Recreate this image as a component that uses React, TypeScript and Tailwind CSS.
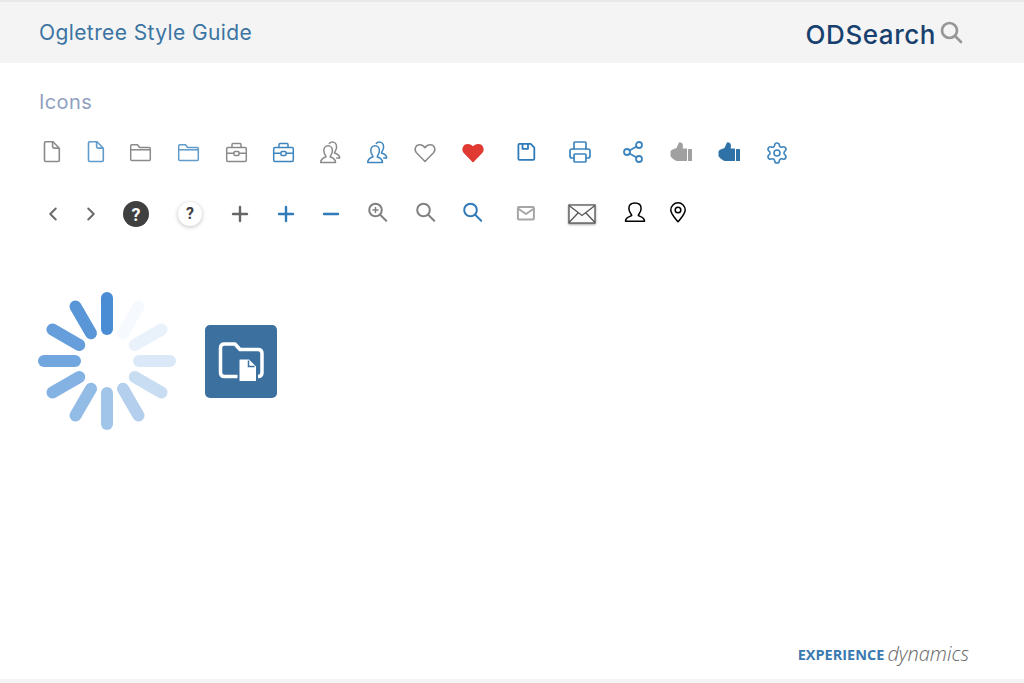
import { ChevronLeft, ChevronRight, Minus, Plus, Printer, Settings, Share2 } from "lucide-react";

type P = { className?: string };

const base = "w-6 h-6 shrink-0";

function Doc({ className }: P) {
  return (
    <svg viewBox="0 0 24 24" fill="none" stroke="currentColor" strokeWidth="1.600" strokeLinejoin="round" className={`${base} ${className}`}>
      <path d="M6.700 1.700h7.300l6.300 6.500v12.100q0 1.200-1.200 1.200H6.700q-1.200 0-1.200-1.200V2.900q0-1.200 1.200-1.200Z" />
      <path d="M13.600 1.900v4.700q0 1.500 1.500 1.500h5" />
    </svg>
  );
}

function Folder({ className }: P) {
  return (
    <svg viewBox="0 0 24 24" fill="none" stroke="currentColor" strokeWidth="1.500" strokeLinejoin="round" className={`${base} ${className}`}>
      <path d="M2.700 7.500V6q0-1.300 1.300-1.300h5.500l2 2.800h9.800q1 0 1 1v11q0 1-1 1H3.700q-1 0-1-1Z" />
      <path d="M2.700 9.800h19.600" />
    </svg>
  );
}

function Briefcase({ className }: P) {
  return (
    <svg viewBox="0 0 24 24" fill="none" stroke="currentColor" strokeWidth="1.500" strokeLinejoin="round" className={`${base} ${className}`}>
      <rect x="2.700" y="7.500" width="19.600" height="14" rx="1.200" />
      <path d="M8 7.500V4.500q0-1 1-1h7q1 0 1 1v3" />
      <path d="M2.700 13.300h7.300M15 13.300h7.300" />
      <rect x="10" y="11.500" width="5" height="4" rx="1" />
    </svg>
  );
}

function Users({ className }: P) {
  return (
    <svg viewBox="0 0 24 24" fill="none" stroke="currentColor" strokeWidth="1.500" strokeLinejoin="round" strokeLinecap="round" className={`${base} ${className}`}>
      <path d="M2.700 22.500c0-4.200 3.200-4.700 5.300-5.700 0-1.200-2.200-2.800-2.200-6.100 0-3.200 2.100-5 4.300-5s4.300 1.800 4.300 5c0 3.300-2.200 4.900-2.200 6.100 2.100 1 5.300 1.500 5.300 5.700Z" />
      <path d="M11.300 3.500c.8-1 1.800-1.500 3-1.500 2.200 0 4.300 1.800 4.300 5 0 3.300-2.100 4.800-2.100 6 1.800.8 5.200 1.700 5.200 5h-3" />
    </svg>
  );
}

function Heart({ className, solid }: P & { solid?: boolean }) {
  return (
    <svg viewBox="0 0 24 24" fill={solid ? "currentColor" : "none"} stroke="currentColor" strokeWidth="1.500" strokeLinejoin="round" className={`${base} ${className}`}>
      <path d="M12 21.500 3.500 12.800C.8 9.900 2.300 4.800 6.800 4.800c2.300 0 3.900 1.200 5.200 3 1.300-1.800 2.900-3 5.200-3 4.500 0 6 5.100 3.300 8Z" />
    </svg>
  );
}

function Disk({ className }: P) {
  return (
    <svg viewBox="0 0 24 24" fill="none" stroke="currentColor" strokeWidth="1.800" strokeLinejoin="round" className={`${base} ${className}`}>
      <path d="M5.500 3.900h11.200l3.600 3.800v11q0 1.100-1.100 1.100H5.500q-1.100 0-1.100-1.100V5q0-1.100 1.100-1.100Z" />
      <path d="M8.500 4v4.800h5.500V4" />
    </svg>
  );
}

function Thumb({ className }: P) {
  return (
    <svg viewBox="0 0 24 24" fill="currentColor" className={`${base} ${className}`}>
      <path d="M1.500 12q0-2 2-2.500l4-1.500 2.200-5q.5-1 1.500-.7 2.600.7 2.800 3l-.3 3.200h3.800q.5 0 .5.5v11.500q0 .5-.5.5H8q-1 0-2-.7l-3-2.300q-1-.8-1.500-2Z" />
      <rect x="19" y="9" width="4" height="12" rx=".5" />
    </svg>
  );
}

function Magnifier({ className, zoom, width = 2 }: P & { zoom?: boolean; width?: number }) {
  return (
    <svg viewBox="0 0 24 24" fill="none" stroke="currentColor" strokeWidth={width} strokeLinecap="round" className={`${base} ${className}`}>
      <circle cx="10.500" cy="10" r="6.300" />
      <path d="m15.200 14.800 6 6" />
      {zoom && <path d="M8 10h5M10.500 7.500v5" strokeWidth="1.500" />}
    </svg>
  );
}

function Person({ className }: P) {
  return (
    <svg viewBox="0 0 24 24" fill="none" stroke="currentColor" strokeWidth="1.500" strokeLinejoin="round" className={`${base} ${className}`}>
      <path d="M2.500 21.200c0-4 3.600-4.300 6.200-5.600 0-1.500-2.800-3-2.800-7.200C5.900 4.800 8.600 3 12 3s6.100 1.800 6.100 5.400c0 4.200-2.800 5.700-2.800 7.200 2.600 1.300 6.200 1.600 6.200 5.600Z" />
    </svg>
  );
}

function Pin({ className }: P) {
  return (
    <svg viewBox="0 0 24 24" fill="none" stroke="currentColor" strokeWidth="1.500" strokeLinejoin="round" className={`${base} ${className}`}>
      <path d="M12 21.800c-3-4-7.200-7.700-7.200-11.800a7.200 7.200 0 0 1 14.400 0c0 4.100-4.200 7.800-7.200 11.800Z" />
      <circle cx="12" cy="10" r="2.800" />
    </svg>
  );
}

const spokes = [1, 0.05, 0.12, 0.2, 0.3, 0.42, 0.52, 0.6, 0.68, 0.78, 0.85, 0.92];

function Spinner() {
  return (
    <svg viewBox="0 0 140 140" className="w-[140px] h-[140px] shrink-0">
      {spokes.map((o, i) => (
        <rect key={i} x="64" y="1" width="12" height="43" rx="6" fill="#4a8dd5" opacity={o} transform={`rotate(${i * 30} 70 70)`} />
      ))}
    </svg>
  );
}

export default function App() {
  return (
    <div className="min-h-screen flex flex-col bg-white font-['Inter',sans-serif]">
      <header className="h-[63px] flex items-center justify-between bg-[#f4f4f4] border-t-2 border-[#e8e8e8] pl-[39px] pr-[61px]">
        <span className="text-[21px] text-[#3b74a2] tracking-[0.4px]">Ogletree Style Guide</span>
        <div className="flex items-center gap-[3px]">
          <span className="pt-[3px] text-[26px] font-medium text-[#17406f] tracking-[0.55px]">ODSearch</span>
          <svg viewBox="0 0 24 24" fill="none" stroke="#979797" strokeWidth="2.700" strokeLinecap="round" className="w-6 h-6 -translate-y-px">
            <circle cx="10.500" cy="10.500" r="7.500" />
            <path d="m16 16 6 6" />
          </svg>
        </div>
      </header>

      <main className="flex-1 pl-[39px]">
        <h2 className="mt-[27px] text-[20px] leading-6 text-[#8f9fbf] tracking-[0.4px]">Icons</h2>

        <div className="mt-[26px] flex items-center h-6">
          <Doc className="text-[#8a8a8a]" />
          <Doc className="ml-5 text-[#5f9bcb]" />
          <Folder className="ml-[21px] text-[#8a8a8a]" />
          <Folder className="ml-6 text-[#5f9bcb]" />
          <Briefcase className="ml-6 text-[#8a8a8a]" />
          <Briefcase className="ml-[23px] text-[#3f85bd]" />
          <Users className="ml-[23px] text-[#8a8a8a]" />
          <Users className="ml-[23px] text-[#3f85bd]" />
          <Heart className="ml-6 text-[#8a8a8a]" />
          <Heart solid className="ml-6 text-[#e03a32]" />
          <Disk className="ml-[29px] text-[#2f7ab8]" />
          <Printer strokeWidth={1.7} className="ml-[30px] w-6 h-6 shrink-0 text-[#3f85bd]" />
          <Share2 strokeWidth={1.8} className="ml-[29px] w-6 h-6 shrink-0 text-[#3f85bd]" />
          <Thumb className="ml-6 text-[#a0a0a0]" />
          <Thumb className="ml-6 text-[#2f72a8]" />
          <Settings strokeWidth={1.6} className="ml-6 w-6 h-6 shrink-0 text-[#3f85bd] translate-y-px" />
        </div>

        <div className="mt-[36px] flex items-center h-7">
          <ChevronLeft strokeWidth={2.200} className="ml-[3px] w-[22px] h-[22px] shrink-0 text-[#6b6b6b]" />
          <ChevronRight strokeWidth={2.200} className="ml-[16px] w-[22px] h-[22px] shrink-0 text-[#6b6b6b]" />
          <div className="ml-[21px] w-[26px] h-[26px] shrink-0 rounded-full bg-[#404040] flex items-center justify-center text-white text-[18px] font-bold font-['Roboto',sans-serif]">?</div>
          <div className="ml-[29px] w-6 h-6 shrink-0 rounded-full bg-white shadow-[0_1px_4px_rgba(0,0,0,0.25)] flex items-center justify-center text-[#404040] text-[16px] font-bold font-['Roboto',sans-serif]">?</div>
          <Plus strokeWidth={2.400} className="ml-[26px] w-6 h-6 shrink-0 text-[#666666]" />
          <Plus strokeWidth={2.400} className="ml-[22px] w-6 h-6 shrink-0 text-[#2f7ab8]" />
          <Minus strokeWidth={2.400} className="ml-[21px] w-6 h-6 shrink-0 text-[#2f7ab8]" />
          <Magnifier zoom className="ml-[22px] text-[#808080] -translate-y-0.5" />
          <Magnifier className="ml-6 text-[#808080] -translate-y-0.5" />
          <Magnifier className="ml-[23px] text-[#2f7ab8] -translate-y-0.5" />
          <svg viewBox="0 0 24 24" fill="none" stroke="#a6a6a6" strokeWidth="2" strokeLinejoin="round" className="ml-[30px] w-6 h-6 shrink-0 -translate-y-px">
            <rect x="3.900" y="5.900" width="16" height="12.500" rx="1" />
            <path d="m4 7.500 8 5.500 8-5.500" />
          </svg>
          <svg viewBox="0 0 28 24" fill="none" stroke="#555555" strokeWidth="1.300" className="ml-[30px] w-7 h-6 shrink-0 drop-shadow-[0_1px_1px_rgba(0,0,0,0.4)]">
            <rect x="1" y="3" width="26" height="18" fill="#fafafa" />
            <path d="m1 3.500 13 10 13-10M1 20.500l9.500-10M27 20.500l-9.500-10" />
          </svg>
          <Person className="ml-[27px] text-black -translate-y-0.5" />
          <Pin className="ml-[19px] text-black -translate-y-0.5" />
        </div>

        <div className="mt-[63px] -ml-[2px] flex items-center">
          <Spinner />
          <div className="ml-[28px] w-[72px] h-[73px] rounded-[5px] bg-[#3b709f] shrink-0">
            <svg viewBox="0 0 72 73" fill="none" className="w-full h-full">
              <path d="M15.500 23q0-4 4-4h10.500l5 5.500h18q4 0 4 4v19q0 4-4 4h-33.500q-4 0-4-4Z" stroke="white" strokeWidth="3.500" strokeLinejoin="round" />
              <path d="M35 33.500h9.500l7.500 7.500v14.500q0 1.500-1.500 1.500H35q-1.500 0-1.500-1.500V35q0-1.500 1.500-1.500Z" fill="white" stroke="#3b709f" strokeWidth="2" />
              <path d="M43.500 35.500v6h6" stroke="#3b709f" strokeWidth="1.500" />
            </svg>
          </div>
        </div>
      </main>

      <footer className="h-[48px] flex flex-col">
        <div className="flex-1 flex items-start justify-end pr-[55px] font-['Open_Sans',sans-serif]">
          <span className="text-[14.500px] leading-[40px] font-bold text-[#3b7ab0]">EXPERIENCE</span>
          <span className="ml-[3px] text-[20px] leading-[38px] italic font-light text-[#666666]">dynamics</span>
        </div>
        <div className="h-1 bg-[#f4f4f4]" />
      </footer>
    </div>
  );
}
